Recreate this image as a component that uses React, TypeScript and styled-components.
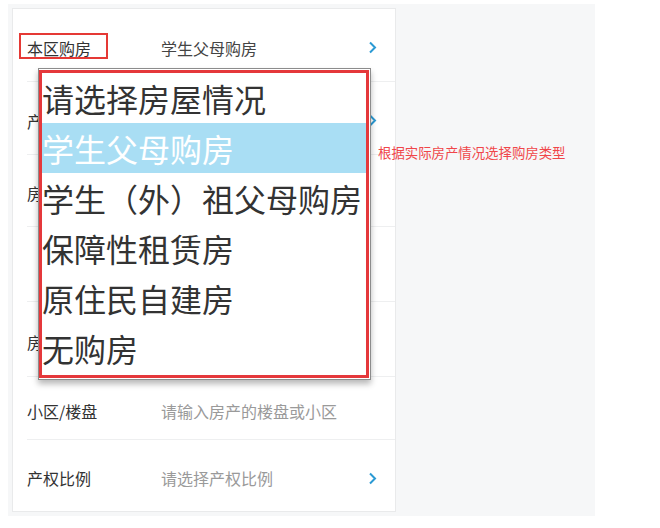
import React from "react";
import styled, { createGlobalStyle } from "styled-components";

const Global = createGlobalStyle`
  html, body { margin: 0; padding: 0; background: #ffffff; }
  body { font-family: "Noto Sans CJK SC", "Noto Sans", sans-serif; }
`;

const Page = styled.div`
  padding: 4px 0 0 8px;
`;

const Stage = styled.div`
  position: relative;
  width: 587px;
  height: 512px;
  box-sizing: border-box;
  padding: 4px;
  background: #f6f7f8;
`;

const Panel = styled.div`
  position: relative;
  width: 384px;
  height: 504px;
  box-sizing: border-box;
  background: #ffffff;
  border: 1px solid #e9eaeb;
  display: flex;
  flex-direction: column;
`;

const Row = styled.div<{ $h: number; $last?: boolean }>`
  height: ${(p) => p.$h}px;
  flex: none;
  margin-left: 14px;
  box-sizing: border-box;
  padding-top: 5px;
  border-bottom: ${(p) => (p.$last ? "none" : "1px solid #eeeff0")};
  display: flex;
  align-items: center;
  font-size: 16px;
`;

const Label = styled.div`
  width: 134px;
  flex: none;
  line-height: 22px;
  color: #333333;
  white-space: nowrap;
  position: relative;
`;

const LabelMark = styled.span`
  position: absolute;
  left: -8px;
  top: -4px;
  width: 89px;
  height: 26px;
  box-sizing: border-box;
  border: 2px solid #e53935;
`;

const Value = styled.div<{ $placeholder?: boolean }>`
  flex: 1;
  line-height: 22px;
  color: ${(p) => (p.$placeholder ? "#9a9a9a" : "#444444")};
  white-space: nowrap;
`;

const Arrow = styled.svg`
  width: 9px;
  height: 13px;
  margin-right: 18px;
  flex: none;
`;

const Chevron = () => (
  <Arrow viewBox="0 0 9 13">
    <polyline points="2,1.5 7,6.5 2,11.5" fill="none" stroke="#2b9ad4" strokeWidth="2" />
  </Arrow>
);

const Dropdown = styled.div`
  position: absolute;
  left: 25px;
  top: 59px;
  width: 333px;
  box-sizing: border-box;
  background: #ffffff;
  border: 1px solid #8c8c8c;
  box-shadow: 0 4px 6px rgba(0, 0, 0, 0.28);
  padding: 1px 1px 1px 0;
`;

const RedFrame = styled.div`
  border: 3px solid #e5383b;
  padding-bottom: 2px;
`;

const Option = styled.div<{ $active?: boolean }>`
  height: 50px;
  line-height: 50px;
  font-size: 32px;
  white-space: nowrap;
  overflow: hidden;
  color: ${(p) => (p.$active ? "#ffffff" : "#333333")};
  background: ${(p) => (p.$active ? "#a9def4" : "transparent")};
`;

const Note = styled.div`
  position: absolute;
  left: 370px;
  top: 138px;
  font-size: 13.4px;
  color: #f0464a;
  white-space: nowrap;
`;

const rows = [
  { h: 73, label: "本区购房", value: "学生父母购房", arrow: true, boxed: true },
  { h: 73, label: "产权类型", value: "请选择产权类型", arrow: true, ph: true },
  { h: 72, label: "房屋类型", value: "请选择房屋类型", arrow: false, ph: true },
  { h: 75, label: "", value: "", arrow: false },
  { h: 75, label: "房产证号", value: "请输入房产证号", arrow: false, ph: true },
  { h: 63, label: "小区/楼盘", value: "请输入房产的楼盘或小区", arrow: false, ph: true },
  { h: 71, label: "产权比例", value: "请选择产权比例", arrow: true, ph: true, last: true },
];

const options = [
  "请选择房屋情况",
  "学生父母购房",
  "学生（外）祖父母购房",
  "保障性租赁房",
  "原住民自建房",
  "无购房",
];

export default function App() {
  return (
    <>
      <Global />
      <Page>
        <Stage>
          <Panel>
            {rows.map((r, i) => (
              <Row key={i} $h={r.h} $last={r.last}>
                <Label>
                  {r.boxed && <LabelMark />}
                  {r.label}
                </Label>
                <Value $placeholder={r.ph}>{r.value}</Value>
                {r.arrow && <Chevron />}
              </Row>
            ))}
            <Dropdown>
              <RedFrame>
                {options.map((o, i) => (
                  <Option key={o} $active={i === 1}>
                    {o}
                  </Option>
                ))}
              </RedFrame>
            </Dropdown>
          </Panel>
          <Note>根据实际房产情况选择购房类型</Note>
        </Stage>
      </Page>
    </>
  );
}
